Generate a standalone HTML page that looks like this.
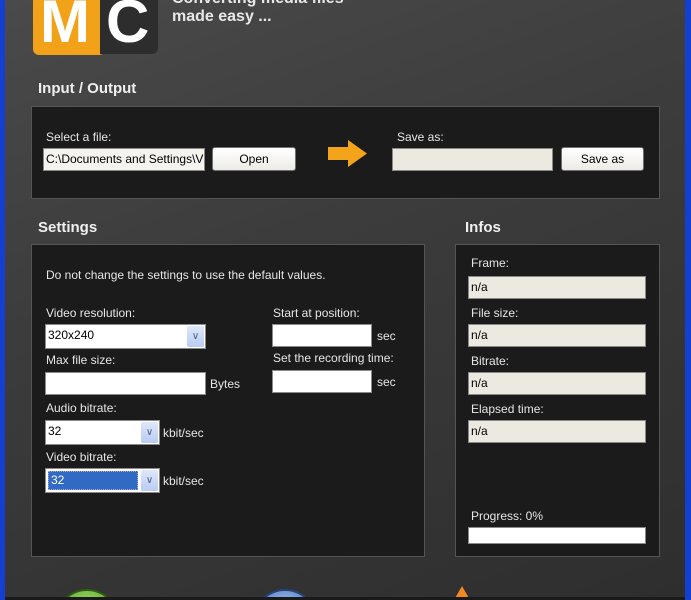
<!DOCTYPE html>
<html style="width:691px;height:600px;overflow:hidden"><head><meta charset="utf-8"><style>
*{margin:0;padding:0;box-sizing:border-box}
body{width:691px;height:600px;overflow:hidden;position:relative;background:linear-gradient(160deg,#4a4a4a 0%,#3c3c3c 40%,#2e2e2e 100%);font-family:"Liberation Sans",sans-serif;font-size:12px;color:#e8e8e8}
.a{position:absolute}
.h{position:absolute;font-weight:bold;font-size:15px;color:#f0f0f0}
.p{position:absolute;background:#1b1b1b;border:1px solid #555}
.l{position:absolute;font-size:12px;color:#e6e6e6;white-space:nowrap}
.in{position:absolute;background:#fff;border:1px solid #8a8a8a;color:#000;font-size:12px;padding:3px 2px;white-space:nowrap;overflow:hidden}
.ro{background:#ece9e0}
.btn{position:absolute;background:linear-gradient(#fff,#ecebe6);border:1px solid #707070;border-radius:3px;color:#000;text-align:center;font-size:12px;line-height:22px}
.dd{position:absolute;right:1px;top:1px;bottom:1px;width:17px;background:linear-gradient(#dfe8fb,#b9cbf3);border-radius:2px;color:#4d6185;font-size:10px;text-align:center;line-height:21px}
</style></head><body>
<div class="a" style="left:0;top:0;width:5px;height:600px;background:#1340d0"></div>
<div class="a" style="left:685px;top:0;width:6px;height:600px;background:#1340d0"></div>
<div class="a" style="left:33px;top:0;width:72px;height:55px;background:#f2a218;border-radius:0 0 6px 6px"></div>
<div class="a" style="left:100px;top:0;width:58px;height:54px;background:#2d2d2d;border-radius:0 0 6px 0"></div>
<div class="a" style="left:40px;top:-8px;font-size:60px;font-weight:bold;color:#fff;line-height:60px;letter-spacing:-2px;height:60px">M</div>
<div class="a" style="left:106px;top:-8px;font-size:60px;font-weight:bold;color:#fff;line-height:60px;height:60px">C</div>
<div class="a" style="left:172px;top:0;width:300px;height:30px;overflow:hidden"><div style="position:absolute;top:-10px;font-size:16px;font-weight:bold;color:#e8e8e8;line-height:18px">Converting media files<br>made easy ...</div></div>

<div class="h" style="left:38px;top:80px">Input / Output</div>
<div class="p" style="left:31px;top:106px;width:629px;height:93px"></div>
<div class="l" style="left:46px;top:130px">Select a file:</div>
<div class="in" style="left:43px;top:148px;width:162px;height:23px;background:#f4f3ee">C:\Documents and Settings\V</div>
<div class="btn" style="left:212px;top:147px;width:84px;height:24px">Open</div>
<svg class="a" style="left:327px;top:139px" width="42" height="29"><path d="M1 8h20V1l19 13.5L21 28v-7H1z" fill="#f3a41b"/></svg>
<div class="l" style="left:397px;top:130px">Save as:</div>
<div class="in ro" style="left:392px;top:148px;width:161px;height:23px"></div>
<div class="btn" style="left:561px;top:147px;width:83px;height:24px">Save as</div>

<div class="h" style="left:38px;top:219px">Settings</div>
<div class="p" style="left:31px;top:244px;width:394px;height:313px"></div>
<div class="l" style="left:46px;top:268px">Do not change the settings to use the default values.</div>
<div class="l" style="left:46px;top:306px">Video resolution:</div>
<div class="in" style="left:45px;top:324px;width:161px;height:25px">320x240<div class="dd">&#8744;</div></div>
<div class="l" style="left:46px;top:353px">Max file size:</div>
<div class="in" style="left:45px;top:372px;width:161px;height:23px"></div>
<div class="l" style="left:210px;top:377px">Bytes</div>
<div class="l" style="left:46px;top:401px">Audio bitrate:</div>
<div class="in" style="left:45px;top:420px;width:115px;height:25px">32<div class="dd">&#8744;</div></div>
<div class="l" style="left:163px;top:426px">kbit/sec</div>
<div class="l" style="left:46px;top:450px">Video bitrate:</div>
<div class="in" style="left:45px;top:468px;width:115px;height:25px;padding:2px"><div style="background:#316ac5;color:#fff;height:19px;width:90px;padding:1px 2px;border:1px dotted #aac">32</div><div class="dd">&#8744;</div></div>
<div class="l" style="left:163px;top:474px">kbit/sec</div>
<div class="l" style="left:273px;top:306px">Start at position:</div>
<div class="in" style="left:272px;top:324px;width:100px;height:23px"></div>
<div class="l" style="left:377px;top:329px">sec</div>
<div class="l" style="left:273px;top:351px">Set the recording time:</div>
<div class="in" style="left:272px;top:370px;width:100px;height:23px"></div>
<div class="l" style="left:377px;top:375px">sec</div>

<div class="h" style="left:465px;top:219px">Infos</div>
<div class="p" style="left:455px;top:244px;width:205px;height:313px"></div>
<div class="l" style="left:471px;top:256px">Frame:</div>
<div class="in ro" style="left:468px;top:276px;width:178px;height:23px">n/a</div>
<div class="l" style="left:471px;top:306px">File size:</div>
<div class="in ro" style="left:468px;top:324px;width:178px;height:23px">n/a</div>
<div class="l" style="left:471px;top:354px">Bitrate:</div>
<div class="in ro" style="left:468px;top:372px;width:178px;height:23px">n/a</div>
<div class="l" style="left:471px;top:402px">Elapsed time:</div>
<div class="in ro" style="left:468px;top:420px;width:178px;height:23px">n/a</div>
<div class="l" style="left:471px;top:509px">Progress: 0%</div>
<div class="in" style="left:468px;top:527px;width:178px;height:17px"></div>

<svg class="a" style="left:5px;top:586px" width="680" height="14">
<defs><radialGradient id="g" cx="50%" cy="30%" r="60%"><stop offset="0" stop-color="#a6e070"/><stop offset="1" stop-color="#4a9a20"/></radialGradient>
<radialGradient id="b" cx="50%" cy="30%" r="60%"><stop offset="0" stop-color="#a8c4ee"/><stop offset="1" stop-color="#3a68b8"/></radialGradient></defs>
<circle cx="82" cy="35" r="31" fill="url(#g)" stroke="#2c5d12" stroke-width="2"/>
<circle cx="280" cy="35" r="31" fill="url(#b)" stroke="#24447a" stroke-width="2"/>
<path d="M457 0L449 14h16z" fill="#f08a20"/>
<rect x="0" y="11" width="680" height="3" fill="#1a1a1a"/>
</svg>
</body></html>
